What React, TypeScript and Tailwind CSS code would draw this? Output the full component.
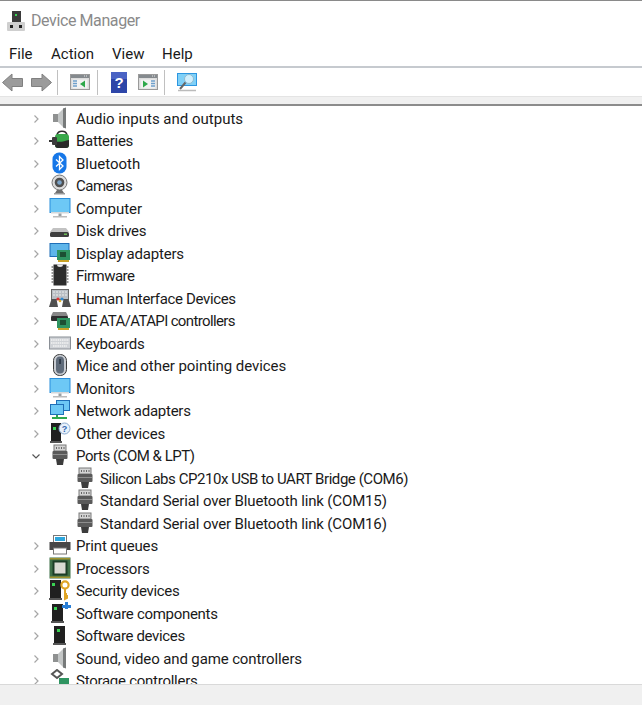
import React from "react";

type Kind = "audio"|"battery"|"bt"|"camera"|"computer"|"disk"|"display"|"chip"|"hid"|"ide"|"keyboard"|"mouse"|"monitor"|"network"|"other"|"port"|"printer"|"cpu"|"security"|"swcomp"|"swdev"|"storage";

function Icon({ kind }: { kind: Kind }) {
  const common = { width: 22, height: 22, viewBox: "0 0 22 22", className: "block" };
  switch (kind) {
    case "audio":
      return <svg {...common}><path d="M4 7h5v8H4z" fill="#8f9191"/><path d="M9 7l6-6v20l-6-6z" fill="#c3c6c6"/><path d="M14 1.500l3-1v21l-3-1z" fill="#777a7a"/></svg>;
    case "battery":
      return <svg {...common}><path d="M8 6c1-5 9-5 10 0" fill="none" stroke="#2c2c2c" strokeWidth="1.600"/><rect x="6" y="5" width="14" height="14" rx="3" fill="#38a84a"/><path d="M6 12c5 2 9 0 14-1v5a3 3 0 0 1-3 3H9a3 3 0 0 1-3-3z" fill="#2a2a2a"/><path d="M0 12h5" stroke="#333" strokeWidth="2"/><rect x="3" y="8" width="5" height="8" rx="1" fill="#3c3c3c"/></svg>;
    case "bt":
      return <svg {...common}><rect x="3.500" y="0.500" width="14" height="21" rx="6.500" fill="#1677e8"/><path d="M7 7.500l7 6.500-3.500 3.500V4.500L14 8l-7 6.500" fill="none" stroke="#fff" strokeWidth="1.300"/></svg>;
    case "camera":
      return <svg {...common}><circle cx="10.500" cy="8.500" r="7.500" fill="#dcdcdc" stroke="#777"/><circle cx="10.500" cy="8.500" r="4.800" fill="#4f4f4f"/><circle cx="10.500" cy="8.500" r="2.300" fill="#7aa3c8"/><path d="M8 16l-2 3h9l-2-3z" fill="#6f6f6f"/><rect x="5" y="19" width="11" height="1.500" fill="#999"/></svg>;
    case "computer":
    case "monitor":
      return <svg {...common}><rect x="0.500" y="1" width="21" height="15" fill="#2a8fdc"/><rect x="1.500" y="2" width="19" height="13" fill="#6dc8f5"/><path d="M2 15h18v1.500H2z" fill="#d5d8da"/><path d="M9.500 16.500h3v2.500h-3z" fill="#9aa0a4"/><rect x="4" y="19" width="14" height="1.500" fill="#bcbcbc"/></svg>;
    case "disk":
      return <svg {...common}><path d="M4 9h13l3 4H1z" fill="#c2c2c2"/><rect x="1" y="13" width="19" height="5" rx="1.500" fill="#3e3e3e"/><rect x="15" y="14.500" width="3" height="1.500" fill="#6bbb55"/></svg>;
    case "display":
      return <svg {...common}><rect x="0.500" y="1" width="20" height="14" fill="#1f6fb8"/><rect x="1.500" y="2" width="18" height="12" fill="#5fb6ea"/><rect x="8" y="8" width="13" height="10" fill="#2f9461"/><rect x="11" y="10" width="6" height="5" fill="#1c4f33"/><path d="M9 18h11v2H9z" fill="#c9a227"/></svg>;
    case "chip":
      return <svg {...common}><rect x="4.500" y="0.500" width="13" height="21" fill="#2c2c2c"/><path d="M8 .5a3 2.500 0 0 0 6 0z" fill="#e5e5e5"/><path d="M2.500 3h2M2.500 6h2M2.500 9h2M2.500 12h2M2.500 15h2M2.500 18h2M17.500 3h2M17.500 6h2M17.500 9h2M17.500 12h2M17.500 15h2M17.500 18h2" stroke="#777" strokeWidth="1.500"/></svg>;
    case "hid":
      return <svg {...common}><rect x="2.500" y="2.500" width="17" height="10" fill="#b9bec4" stroke="#6a6a6a"/><path d="M4 5h14M4 8h14" stroke="#eee" strokeWidth="1.200" strokeDasharray="2 1"/><path d="M0 20l2.500-8h5L9 20zM13 20l1.500-8h5L22 20z" fill="#505050"/><circle cx="9" cy="12" r="1.600" fill="#d33"/><circle cx="13" cy="12" r="1.600" fill="#38c"/><circle cx="11" cy="14" r="1.300" fill="#e0b030"/></svg>;
    case "ide":
      return <svg {...common}><path d="M4 3h13l2 4H2z" fill="#888"/><rect x="2" y="7" width="17" height="5" rx="1" fill="#2f2f2f"/><rect x="8" y="9" width="13" height="10" fill="#2f9461"/><rect x="11" y="11" width="6" height="5" fill="#1c4f33"/><path d="M9 19h11v2H9z" fill="#c9a227"/></svg>;
    case "keyboard":
      return <svg {...common}><rect x="0.500" y="5" width="21" height="12" fill="#cfd2d6" stroke="#8a8f96"/><path d="M2 8h18M2 11h18M4 14h14" stroke="#f4f4f4" strokeWidth="1.500" strokeDasharray="1.500 .7"/></svg>;
    case "mouse":
      return <svg {...common}><rect x="4.500" y="0.500" width="13" height="21" rx="6" fill="#c8ccd2" stroke="#3c3c3c"/><rect x="7" y="2.500" width="8" height="17" rx="4" fill="#5f6b7a"/><rect x="10.300" y="5" width="1.500" height="5" fill="#25303d"/></svg>;
    case "network":
      return <svg {...common}><rect x="7" y="1" width="14" height="11" fill="#1f6fb8"/><rect x="8" y="2" width="12" height="9" fill="#6dc8f5"/><rect x="1" y="5" width="14" height="11" fill="#1f6fb8"/><rect x="2" y="6" width="12" height="9" fill="#6dc8f5"/><path d="M3 19h15M8 16v3" stroke="#2fa84f" strokeWidth="2"/></svg>;
    case "other":
      return <svg {...common}><rect x="2" y="1" width="10" height="18" fill="#202020"/><rect x="4" y="5" width="3" height="3" fill="#39d353"/><path d="M1 19h12v2H1z" fill="#555"/><circle cx="15.500" cy="6.500" r="5.500" fill="#e8f1fb" stroke="#8aaad0"/><text x="15.500" y="10" textAnchor="middle" fontSize="9" fontWeight="700" fill="#2f66b0" fontFamily="Liberation Sans">?</text></svg>;
    case "port":
      return <svg {...common}><rect x="5" y="1" width="12" height="6" fill="#d4d4d4" stroke="#7a7a7a"/><path d="M7.500 3v2M10 3v2M12.500 3v2M15 3v2" stroke="#666"/><rect x="3.500" y="7" width="15" height="8" rx="1" fill="#5a5a5a"/><path d="M4 10.500h14" stroke="#8e8e8e"/><path d="M7 15h8l-1 6H8z" fill="#3c3c3c"/></svg>;
    case "printer":
      return <svg {...common}><rect x="4.500" y="1.500" width="13" height="7" fill="#fff" stroke="#777"/><path d="M6 3h10v4H6z" fill="#2da6dd"/><rect x="0.500" y="8" width="21" height="8" fill="#484848"/><rect x="4.500" y="14" width="13" height="6" fill="#fff" stroke="#777"/></svg>;
    case "cpu":
      return <svg {...common}><rect x="0.500" y="0.500" width="21" height="21" fill="#3f7048"/><rect x="3.500" y="3.500" width="15" height="15" fill="#1d3d26"/><rect x="5.500" y="5.500" width="11" height="11" fill="#d9d9d2"/><path d="M1 1h20v1.500H1zM1 19.500h20V21H1z" fill="#c9a227" opacity=".7"/></svg>;
    case "security":
      return <svg {...common}><rect x="1" y="1" width="11" height="18" fill="#202020"/><rect x="3" y="4" width="3" height="3" fill="#39d353"/><path d="M0 19h13v2H0z" fill="#555"/><circle cx="16" cy="6" r="3.600" fill="none" stroke="#e0a526" strokeWidth="2.200"/><path d="M16 10v10l2-1v-2h-1v-2h1" fill="none" stroke="#e0a526" strokeWidth="2"/></svg>;
    case "swcomp":
      return <svg {...common}><rect x="3" y="2" width="11" height="17" fill="#202020"/><rect x="5" y="5" width="3" height="3" fill="#39d353"/><path d="M2 19h13v2H2z" fill="#555"/><path d="M16 0h3v3h3v3h-3v1h-3V6h-3V3h3z" fill="#2b7fd6"/></svg>;
    case "swdev":
      return <svg {...common}><rect x="5" y="2" width="11" height="17" fill="#202020"/><rect x="8" y="5" width="3" height="3" fill="#39d353"/><path d="M4 19h13v2H4z" fill="#555"/></svg>;
    case "storage":
      return <svg {...common}><path d="M3 5l5-4 5 4-5 4z" fill="none" stroke="#555" strokeWidth="2"/><rect x="10" y="9" width="10" height="7" fill="#2f9461"/></svg>;
  }
}

const Chevron = ({ open }: { open?: boolean }) => (
  <svg width="10" height="10" viewBox="0 0 10 10" className="block">
    {open ? <path d="M1.500 3.500L5 7l3.500-3.500" fill="none" stroke="#555" strokeWidth="1.200"/> : <path d="M3.500 1.500L7 5 3.500 8.500" fill="none" stroke="#a6a6a6" strokeWidth="1.200"/>}
  </svg>
);

const rows: [string, Kind, string][] = [
  ["Audio inputs and outputs","audio",""],
  ["Batteries","battery","tracking-[-0.3px]"],
  ["Bluetooth","bt",""],
  ["Cameras","camera","tracking-[-0.5px]"],
  ["Computer","computer",""],
  ["Disk drives","disk","tracking-[-0.2px]"],
  ["Display adapters","display","tracking-[-0.2px]"],
  ["Firmware","chip","tracking-[-0.5px]"],
  ["Human Interface Devices","hid","tracking-[-0.35px]"],
  ["IDE ATA/ATAPI controllers","ide","tracking-[-0.64px]"],
  ["Keyboards","keyboard","tracking-[-0.2px]"],
  ["Mice and other pointing devices","mouse","tracking-[-0.06px]"],
  ["Monitors","monitor","tracking-[-0.1px]"],
  ["Network adapters","network","tracking-[-0.25px]"],
  ["Other devices","other","tracking-[-0.15px]"],
];
const rows2: [string, Kind, string][] = [
  ["Print queues","printer","tracking-[-0.15px]"],
  ["Processors","cpu","tracking-[-0.2px]"],
  ["Security devices","security","tracking-[-0.3px]"],
  ["Software components","swcomp","tracking-[-0.3px]"],
  ["Software devices","swdev","tracking-[-0.35px]"],
  ["Sound, video and game controllers","audio","tracking-[-0.12px]"],
  ["Storage controllers","storage","tracking-[-0.26px]"],
];
const ports: [string, string][] = [
  ["Silicon Labs CP210x USB to UART Bridge (COM6)","tracking-[-0.44px]"],
  ["Standard Serial over Bluetooth link (COM15)","tracking-[-0.14px]"],
  ["Standard Serial over Bluetooth link (COM16)","tracking-[-0.14px]"],
];

function Row({ label, kind, open, track }: { label: string; kind: Kind; open?: boolean; track: string }) {
  return (
    <div className="flex h-[22.5px] items-center pl-[31px]">
      <Chevron open={open} />
      <span className="ml-[8px] w-[27px] shrink-0 -translate-y-px"><Icon kind={kind} /></span>
      <span className={`whitespace-nowrap ${track}`}>{label}</span>
    </div>
  );
}

const Win = ({ side }: { side: "l" | "r" }) => (
  <svg width="20" height="16" viewBox="0 0 20 16" className="block">
    <rect x=".5" y=".5" width="19" height="15" fill="#dcdcdc" stroke="#9a9a9a"/>
    <rect x="1" y="1" width="18" height="3" fill="#858a8e"/>
    <path d="M14 2h1M16 2h1" stroke="#e8e8e8"/>
    <rect x="2.500" y="5.500" width="15" height="9" fill="#f2f2f2"/>
    {side === "l"
      ? <><path d="M3 7h4M3 9.500h4M3 12h4" stroke="#6fa0cc" strokeWidth="1.300"/><path d="M15 6.500v7l-5-3.500z" fill="#2ea84a"/></>
      : <><path d="M13 7h4M13 9.500h4M13 12h4" stroke="#6fa0cc" strokeWidth="1.300"/><path d="M5 6.500v7l5-3.500z" fill="#2ea84a"/></>}
  </svg>
);
const Sep = ({ className }: { className: string }) => <div className={`h-[25px] w-px bg-[#c0c0c0] ${className}`} />;

export default function App() {
  return (
    <div className="flex h-[705px] w-[642px] flex-col overflow-hidden bg-white text-[15px] text-[#1a1a1a]" style={{ fontFamily: 'Roboto,"Open Sans",sans-serif' }}>
      <div className="h-px bg-[#8a8a8a]" />
      <div className="flex h-[39px] items-center pl-[7px]">
        <svg width="18" height="20" viewBox="0 0 18 20" className="mr-[6px] block">
          <rect x="5" y="0" width="9" height="11" fill="#3a3a3a"/><rect x="8" y="3" width="2" height="2" fill="#39d353"/>
          <rect x="0" y="11" width="18" height="9" rx="1" fill="#cfcfcf"/><rect x="3" y="14" width="3" height="3" fill="#222"/><rect x="12" y="14" width="3" height="3" fill="#222"/>
        </svg>
        <span className="text-[16px] tracking-[-0.4px] text-[#8a8a8a]">Device Manager</span>
      </div>
      <div className="flex h-[28px] items-center border-b-2 border-[#c6cacf] pl-[9px] pt-[2px]">
        <span className="w-[42px]">File</span><span className="w-[61px]">Action</span><span className="w-[50px]">View</span><span>Help</span>
      </div>
      <div className="flex h-[28px] items-center pl-[2px]">
        <svg width="21" height="19" viewBox="0 0 21 19" className="block"><path d="M0.500 9.500L10 1v4.500h10.500v8H10V18z" fill="#9b9b9b" stroke="#808080"/></svg>
        <svg width="21" height="19" viewBox="0 0 21 19" className="ml-[8px] block"><path d="M20.500 9.500L11 1v4.500H.5v8H11V18z" fill="#9b9b9b" stroke="#808080"/></svg>
        <Sep className="ml-[5px]" />
        <span className="ml-[12px]"><Win side="l" /></span>
        <Sep className="ml-[7px]" />
        <svg width="16" height="21" viewBox="0 0 16 21" className="ml-[13px] block"><rect width="16" height="21" fill="#2d45a8"/><rect width="16" height="7" fill="#4a63c4"/><text x="8" y="16" textAnchor="middle" fontSize="15" fontWeight="700" fill="#fff" fontFamily="Liberation Sans">?</text></svg>
        <span className="ml-[11px]"><Win side="r" /></span>
        <Sep className="ml-[6px]" />
        <svg width="20" height="19" viewBox="0 0 20 19" className="ml-[12px] block"><rect x=".5" y=".5" width="19" height="12" fill="#7fd0f7" stroke="#2d96e0"/><circle cx="12" cy="6" r="4.500" fill="#cfeefc" stroke="#8fb9cf"/><path d="M8.500 9.500L3 16" stroke="#666" strokeWidth="2"/><path d="M1 17.500h18" stroke="#bbb" strokeWidth="1.500"/></svg>
      </div>
      <div className="h-[8px] border-t border-[#e4e4e4] bg-[#f0f0f0]" />
      <div className="h-[2px] bg-[#8c8c8c]" />
      <div className="min-h-0 flex-1 overflow-hidden pt-[1.5px]">
        {rows.map(([l, k, t]) => <Row key={l} label={l} kind={k} track={t} />)}
        <Row label="Ports (COM & LPT)" kind="port" open track="tracking-[-0.47px]" />
        {ports.map(([p, t]) => (
          <div key={p} className="flex h-[22.5px] items-center pl-[74px]">
            <span className="w-[26px] shrink-0 -translate-y-px"><Icon kind="port" /></span>
            <span className={`whitespace-nowrap ${t}`}>{p}</span>
          </div>
        ))}
        {rows2.map(([l, k, t]) => <Row key={l} label={l} kind={k} track={t} />)}
      </div>
      <div className="h-[21px] shrink-0 border-t border-[#d9d9d9] bg-[#f0f0f0]" />
    </div>
  );
}
